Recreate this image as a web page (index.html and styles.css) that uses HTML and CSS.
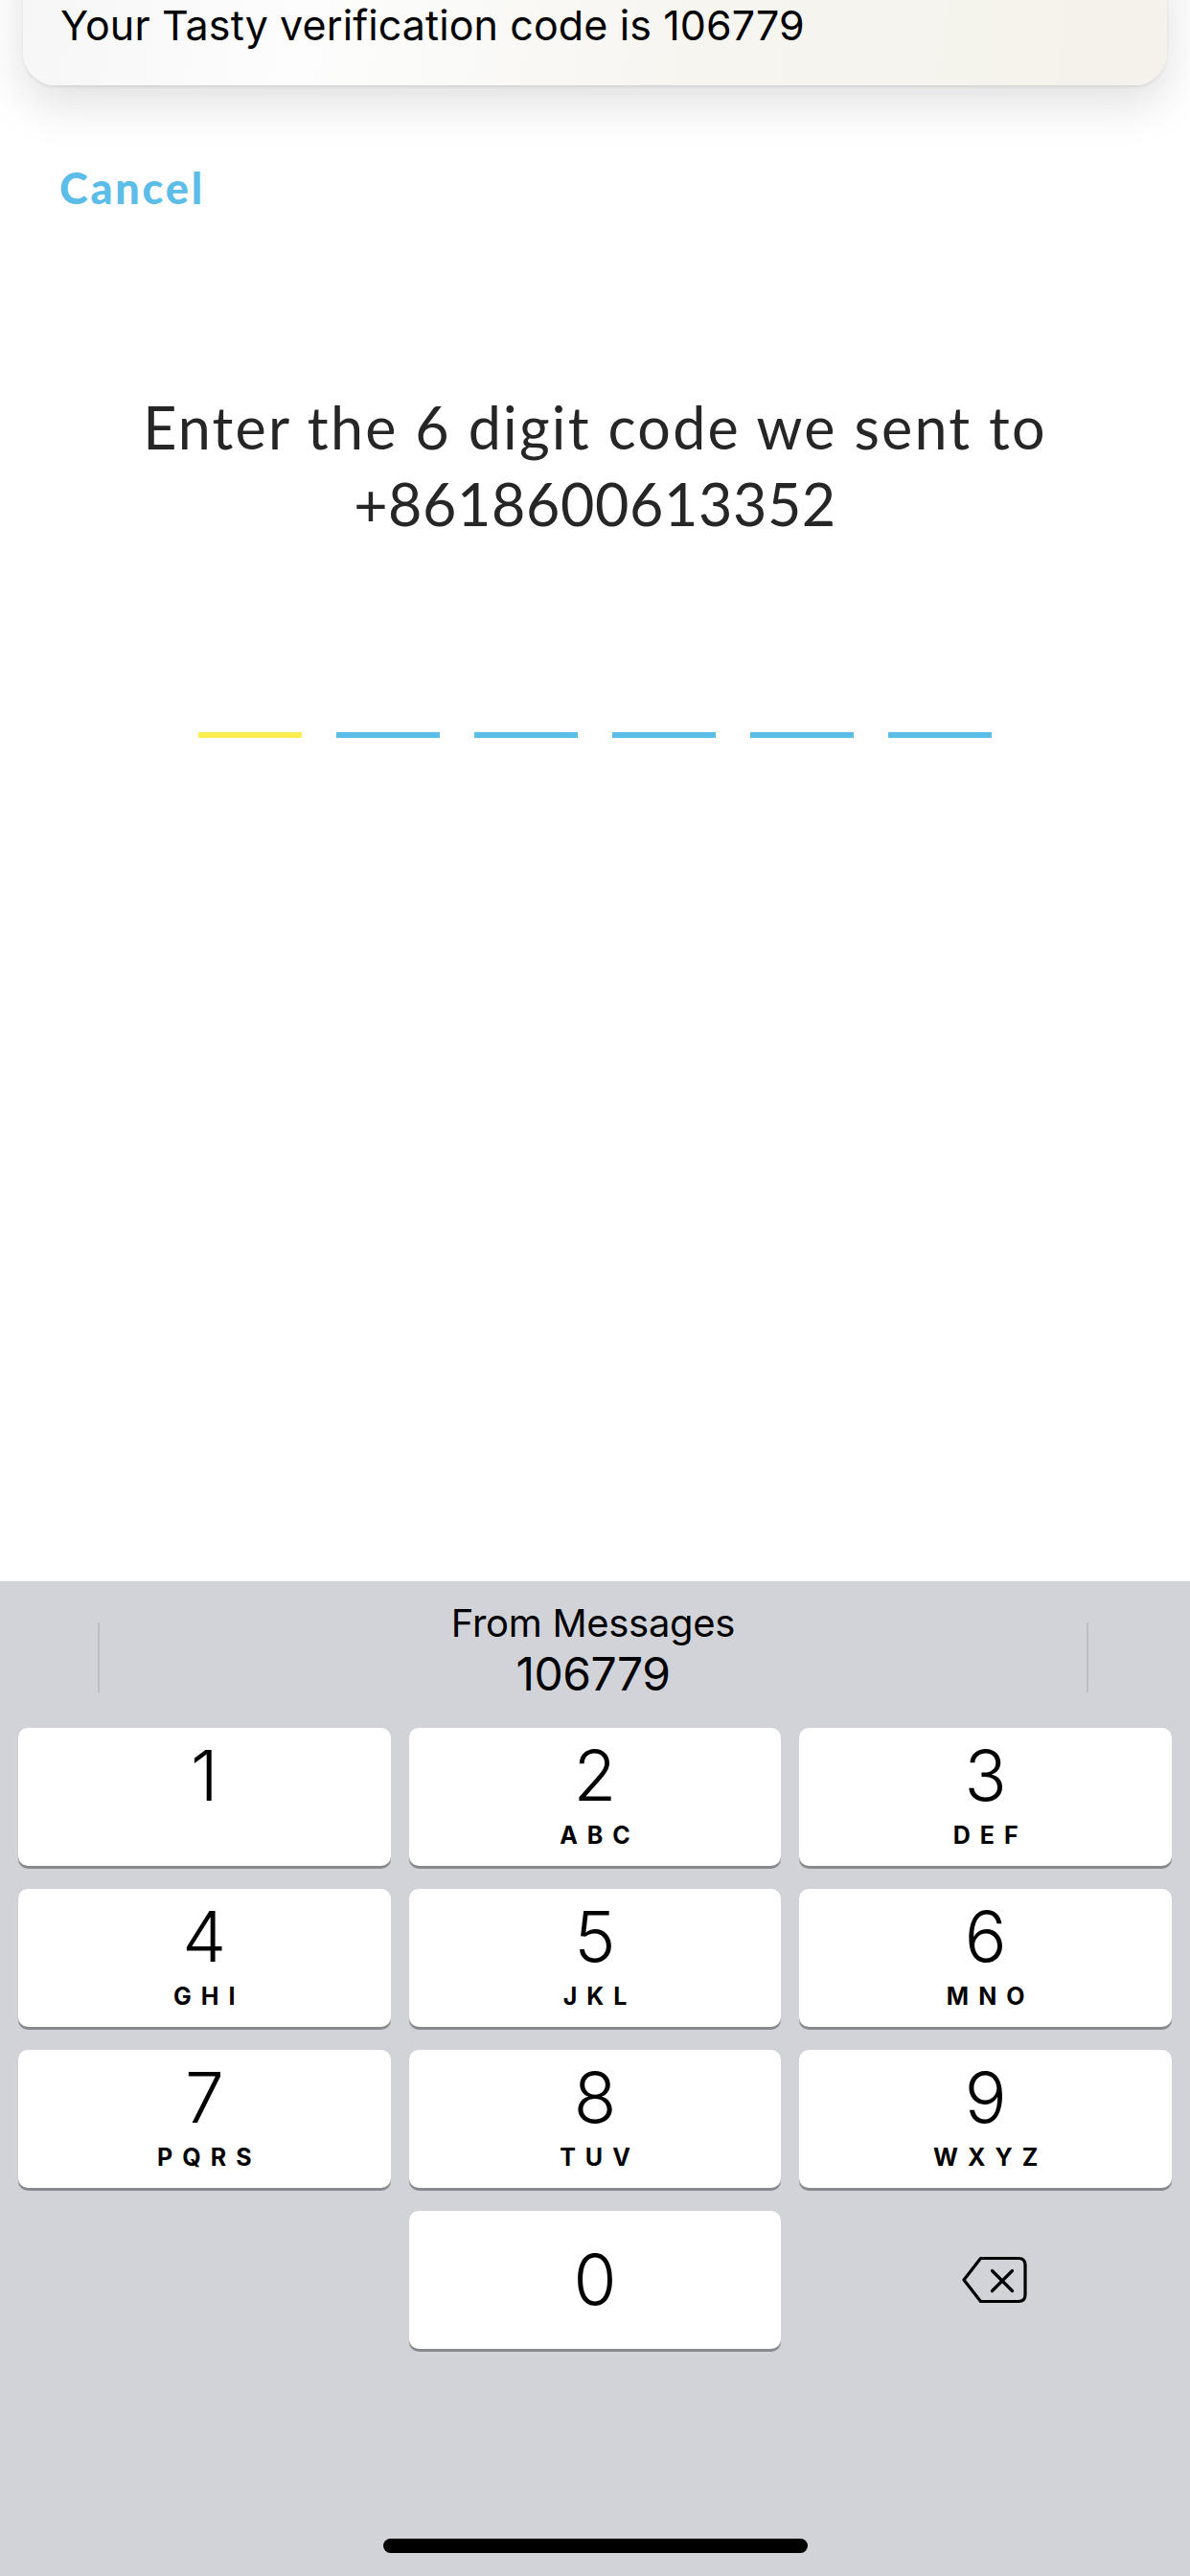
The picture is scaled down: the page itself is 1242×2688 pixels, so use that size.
FILE: index.html
```html
<!DOCTYPE html>
<html lang="en">

<head>
    <meta charset="UTF-8">
    <title>Verification code</title>
    <link rel="stylesheet" href="styles.css">
</head>

<body>
    <div id="screen">
        <!-- notification banner over the app -->
        <div class="banner">
            <p class="banner-text">Your Tasty verification code is 106779</p>
        </div>

        <div class="app">
            <a class="cancel">Cancel</a>
            <h1 class="prompt"><span class="line">Enter the 6 digit code we sent to</span><br><span class="phone">+8618600613352</span></h1>
            <ul class="code">
                <li class="active"></li>
                <li></li>
                <li></li>
                <li></li>
                <li></li>
                <li></li>
            </ul>
        </div>

        <div class="keyboard">
            <div class="suggest">
                <span class="sep"></span>
                <div class="suggest-text">
                    <span class="from">From Messages</span>
                    <span class="otp">106779</span>
                </div>
                <span class="sep"></span>
            </div>
            <div class="keys">
                <div class="key"><span class="num">1</span><span class="abc"></span></div>
                <div class="key"><span class="num">2</span><span class="abc">ABC</span></div>
                <div class="key"><span class="num">3</span><span class="abc">DEF</span></div>
                <div class="key"><span class="num">4</span><span class="abc">GHI</span></div>
                <div class="key"><span class="num">5</span><span class="abc">JKL</span></div>
                <div class="key"><span class="num">6</span><span class="abc">MNO</span></div>
                <div class="key"><span class="num">7</span><span class="abc">PQRS</span></div>
                <div class="key"><span class="num">8</span><span class="abc">TUV</span></div>
                <div class="key"><span class="num">9</span><span class="abc">WXYZ</span></div>
                <div class="blank"></div>
                <div class="key zero"><span class="num">0</span></div>
                <div class="del">
                    <svg width="68" height="50" viewBox="0 0 68 50">
                        <path d="M2 25 L19.5 2.5 H59 Q66 2.5 66 9.5 V40.5 Q66 47.5 59 47.5 H19.5 Z" fill="none" stroke="#000" stroke-width="3.2" stroke-linejoin="round" />
                        <path d="M31.5 15.5 L52.5 36.5 M52.5 15.5 L31.5 36.5" stroke="#000" stroke-width="3.2" stroke-linecap="round" />
                    </svg>
                </div>
            </div>
            <div class="home-bar"></div>
        </div>
    </div>
</body>

</html>
```

FILE: styles.css
```css
* {
    margin: 0;
    padding: 0;
    list-style: none;
    box-sizing: border-box;
}

body {
    background: #fff;
    font-family: "Inter", "Liberation Sans", sans-serif;
}

#screen {
    width: 1242px;
    height: 2688px;
    position: relative;
    overflow: hidden;
    display: flex;
    flex-direction: column;
}

/* notification */
.banner {
    position: absolute;
    left: 24px;
    right: 24px;
    top: -60px;
    height: 149px;
    border-radius: 34px;
    background: linear-gradient(100deg, #f6f6f6 0%, #fdfdfd 25%, #f6f5f0 60%, #f4f2ea 100%);
    box-shadow: 0 18px 50px rgba(0, 0, 0, 0.13), 0 2px 3px rgba(0, 0, 0, 0.08);
    padding: 60px 0 0 39px;
}

.banner-text {
    font-size: 43px;
    line-height: 52px;
    color: #000;
    letter-spacing: 0.1px;
}

/* app */
.app {
    height: 1650px;
    padding-top: 168px;
    font-family: "Lato", "Open Sans", sans-serif;
}

.cancel {
    display: block;
    margin-left: 62px;
    font-size: 45px;
    line-height: 56px;
    font-weight: 900;
    letter-spacing: 2.8px;
    color: #5bbde8;
}

.prompt {
    margin-top: 182px;
    text-align: center;
    font-size: 61px;
    line-height: 80px;
    font-weight: 400;
    color: #262626;
}

.prompt .line {
    letter-spacing: 2.2px;
}

.prompt .phone {
    letter-spacing: 0.6px;
}

.code {
    display: flex;
    justify-content: center;
    gap: 36px;
    margin-top: 198px;
}

.code li {
    width: 108px;
    height: 6px;
    background: #5bbde8;
}

.code li.active {
    background: #fcee50;
}

/* keyboard */
.keyboard {
    flex: 1;
    background: #d1d3d9;
    display: flex;
    flex-direction: column;
}

.suggest {
    height: 153px;
    display: flex;
    justify-content: space-between;
    align-items: flex-start;
    padding: 19px 106px 0 102px;
}

.sep {
    width: 2px;
    height: 73px;
    margin-top: 24px;
    background: #bcbec3;
}

.suggest-text {
    display: flex;
    flex-direction: column;
    align-items: center;
    color: #000;
}

.from {
    font-size: 40px;
    line-height: 50px;
    letter-spacing: -0.3px;
}

.otp {
    font-size: 48px;
    line-height: 56px;
    letter-spacing: -0.5px;
}

.keys {
    display: grid;
    grid-template-columns: repeat(3, 1fr);
    grid-auto-rows: 144px;
    row-gap: 24px;
    column-gap: 19px;
    padding: 0 19px;
}

.key {
    background: #fff;
    border-radius: 10px;
    box-shadow: 0 3px 0 #898a8e;
    display: flex;
    flex-direction: column;
    align-items: center;
    padding-top: 10px;
    color: #000;
}

.num {
    font-size: 73px;
    line-height: 80px;
    font-weight: 300;
}

.abc {
    margin-top: 7px;
    font-size: 25px;
    line-height: 30px;
    font-weight: 700;
    letter-spacing: 10px;
    margin-right: -10px;
}

.key.zero {
    justify-content: center;
    padding-top: 0;
}

.del {
    display: flex;
    align-items: center;
    justify-content: center;
    padding-left: 18px;
}

.home-bar {
    width: 443px;
    height: 15px;
    border-radius: 8px;
    background: #000;
    margin: auto auto 24px;
}
```
